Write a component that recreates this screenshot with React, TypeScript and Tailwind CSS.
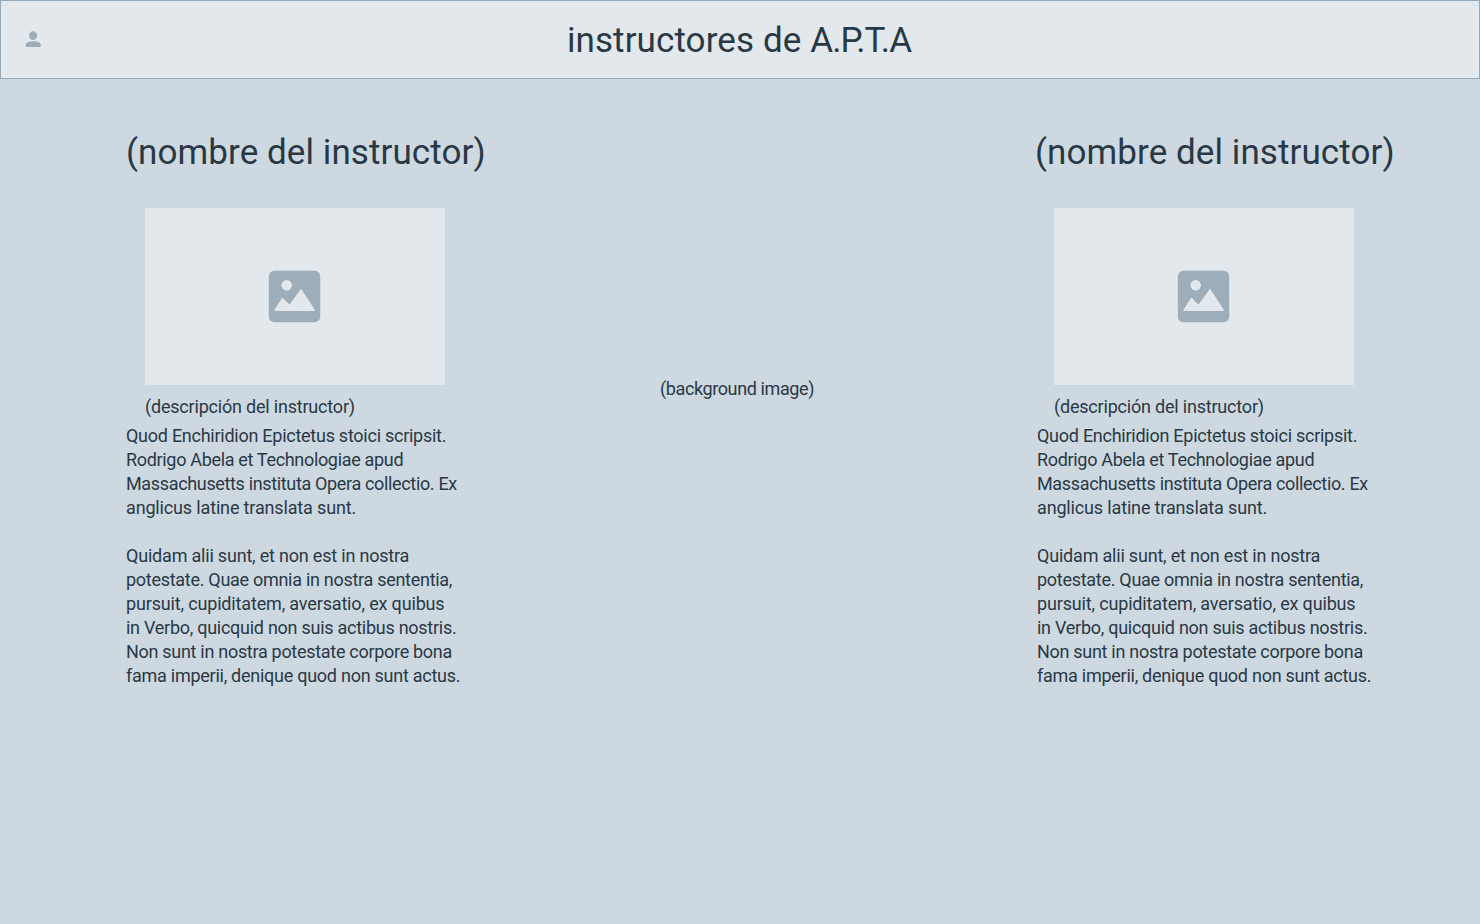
const INTRO = [
  { text: "Quod Enchiridion Epictetus stoici scripsit.", tracking: "tracking-[-0.26px]" },
  { text: "Rodrigo Abela et Technologiae apud", tracking: "tracking-[-0.325px]" },
  { text: "Massachusetts instituta Opera collectio. Ex", tracking: "tracking-[-0.345px]" },
  { text: "anglicus latine translata sunt.", tracking: "tracking-[-0.155px]" },
];

const DETAILS = [
  { text: "Quidam alii sunt, et non est in nostra", tracking: "tracking-[-0.2px]" },
  { text: "potestate. Quae omnia in nostra sententia,", tracking: "tracking-[-0.285px]" },
  { text: "pursuit, cupiditatem, aversatio, ex quibus", tracking: "tracking-[-0.16px]" },
  { text: "in Verbo, quicquid non suis actibus nostris.", tracking: "tracking-[-0.265px]" },
  { text: "Non sunt in nostra potestate corpore bona", tracking: "tracking-[-0.295px]" },
  { text: "fama imperii, denique quod non sunt actus.", tracking: "tracking-[-0.26px]" },
];

function UserIcon() {
  return (
    <svg className="mb-[2px] h-[18px] w-[18px]" viewBox="0 0 18 18" fill="#9dadb9" aria-hidden="true">
      <ellipse cx="10.1" cy="5.6" rx="4" ry="4.4" />
      <path d="M2.8 16.9V14.4C2.8 12.2 6.1 11.2 10.1 11.2S17.6 12.2 17.6 14.4V16.9Z" />
    </svg>
  );
}

function ImageIcon() {
  return (
    <svg className="h-[52px] w-[52px] overflow-visible" viewBox="0.5 0.5 52 52" aria-hidden="true">
      <rect x="0.3" y="0.3" width="51.4" height="51.4" rx="5.5" fill="#9dadb9" />
      <circle cx="18.2" cy="14.7" r="5.2" fill="#e2e8eb" />
      <path
        d="M6.6 39.8L14 28.2L21.2 35.2L32.5 19.4L45.6 39.8Z"
        fill="#e2e8eb"
        stroke="#e2e8eb"
        strokeWidth="1.6"
        strokeLinejoin="round"
      />
    </svg>
  );
}

function Lines({ lines }: { lines: { text: string; tracking: string }[] }) {
  return (
    <p>
      {lines.map((line) => (
        <span key={line.text} className={`block ${line.tracking}`}>
          {line.text}
        </span>
      ))}
    </p>
  );
}

function Instructor({ textInset }: { textInset: string }) {
  return (
    <section className="w-[362px] shrink-0 whitespace-nowrap">
      <h2 className="text-[35px] leading-[44px] tracking-[0.08px]">(nombre del instructor)</h2>
      <figure className="mt-[33px] ml-[19px] w-[300px]">
        <div className="flex h-[177px] items-center justify-center bg-[#e2e8eb]">
          <ImageIcon />
        </div>
        <figcaption className="mt-[10px] tracking-[-0.2px]">(descripción del instructor)</figcaption>
      </figure>
      <div className={`mt-[5px] flex flex-col gap-6 ${textInset}`}>
        <Lines lines={INTRO} />
        <Lines lines={DETAILS} />
      </div>
    </section>
  );
}

export default function App() {
  return (
    <div className="flex h-screen min-h-[924px] flex-col bg-[#ced8e1] font-['Roboto',sans-serif] text-[18px] leading-6 text-[#293845]">
      <header className="grid h-[79px] shrink-0 grid-cols-[1fr_auto_1fr] items-center border border-[#94a9ba] bg-[#e2e8eb] px-[22px]">
        <UserIcon />
        <h1 className="pt-[3px] pr-[2px] text-[35px] leading-[44px] tracking-[0.1px]">
          instructores de <span className="tracking-[-0.88px]">A.P.T.A</span>
        </h1>
      </header>
      <main className="flex grow items-start pt-[52px] pl-[126px]">
        <Instructor textInset="ml-0" />
        <div className="flex w-[547px] shrink-0 pt-[246px] pl-[172px]">
          <p className="whitespace-nowrap tracking-[-0.39px]">(background image)</p>
        </div>
        <Instructor textInset="ml-[2px]" />
      </main>
    </div>
  );
}
